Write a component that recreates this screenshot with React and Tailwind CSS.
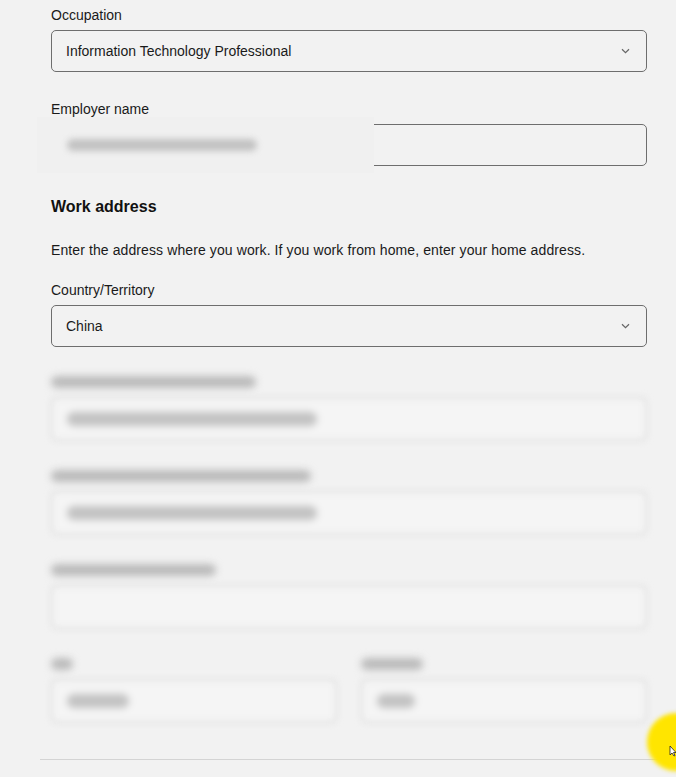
import React from "react";

const font = { fontFamily: '"Liberation Sans", Arial, sans-serif' };

const Chevron = () => (
  <svg width="9" height="6" viewBox="0 0 9 6" className="text-[#666]">
    <polyline points="1,1.2 4.5,4.6 8,1.2" fill="none" stroke="currentColor" strokeWidth="1.2" />
  </svg>
);

const SelectField = ({ label, value }) => (
  <div className="flex flex-col">
    <label className="text-sm leading-5 text-[#1a1a1a]">{label}</label>
    <div className="mt-[5px] h-[42px] flex items-center justify-between rounded-[5px] border border-[#6e6e6e] pl-[14px] pr-[16px] text-sm text-[#1a1a1a]">
      <span>{value}</span>
      <Chevron />
    </div>
  </div>
);

const BlurField = ({ labelW, valueW }) => (
  <div className="flex flex-col">
    <div className="h-5 flex items-center">
      <div className={`h-[12px] rounded-full bg-[#bababa] blur-[3px] ${labelW}`} />
    </div>
    <div className="mt-[5px] h-[44px] flex items-center rounded-[5px] border-2 border-[#dadada] bg-[#f5f5f5] px-[14px] blur-[2px]">
      {valueW && <div className={`h-[14px] rounded-full bg-[#c2c2c2] blur-[2px] ${valueW}`} />}
    </div>
  </div>
);

export default function App() {
  return (
    <div className="relative min-h-[777px] w-[676px] overflow-hidden bg-[#f2f2f2]" style={font}>
      <div className="ml-[51px] w-[596px] pt-[5px]">
        <SelectField label="Occupation" value="Information Technology Professional" />

        <div className="mt-[27px] flex flex-col">
          <label className="text-sm leading-5 text-[#1a1a1a]">Employer name</label>
          <div className="relative mt-[5px] h-[42px] rounded-[5px] border border-[#6e6e6e]">
            <div className="absolute left-[-15px] top-[-8px] h-[56px] w-[337px] bg-[#f0f0f0] flex items-center pl-[30px]">
              <div className="h-[12px] w-[190px] rounded-full bg-[#c2c2c2] blur-[3px]" />
            </div>
          </div>
        </div>

        <h2 className="mt-[31px] text-base font-bold leading-5 text-[#111]">Work address</h2>
        <p className="mt-[23px] text-sm leading-5 tracking-[0.1px] text-[#1a1a1a]">
          Enter the address where you work. If you work from home, enter your home address.
        </p>

        <div className="mt-[20px]">
          <SelectField label="Country/Territory" value="China" />
        </div>

        <div className="mt-[25px] flex flex-col gap-[25px] blur-[2px]">
          <BlurField labelW="w-[205px]" valueW="w-[250px]" />
          <BlurField labelW="w-[260px]" valueW="w-[250px]" />
          <BlurField labelW="w-[165px]" />
          <div className="grid grid-cols-2 gap-[24px]">
            <BlurField labelW="w-[22px]" valueW="w-[62px]" />
            <BlurField labelW="w-[62px]" valueW="w-[38px]" />
          </div>
        </div>
      </div>

      <div className="ml-[40px] mt-[36px] border-t border-[#d4d4d4]" />

      <div className="absolute left-[647px] top-[713px] h-[58px] w-[58px] rounded-full bg-[#ffe500] blur-[2px]" />
      <svg className="absolute left-[669px] top-[745px]" width="7" height="12" viewBox="0 0 7 12">
        <path d="M1 1 L1 10 L3 8 L5 11 L6 10.5 L4.5 7.5 L7 7.5 Z" fill="#fff" stroke="#222" strokeWidth="0.8" />
      </svg>
    </div>
  );
}
